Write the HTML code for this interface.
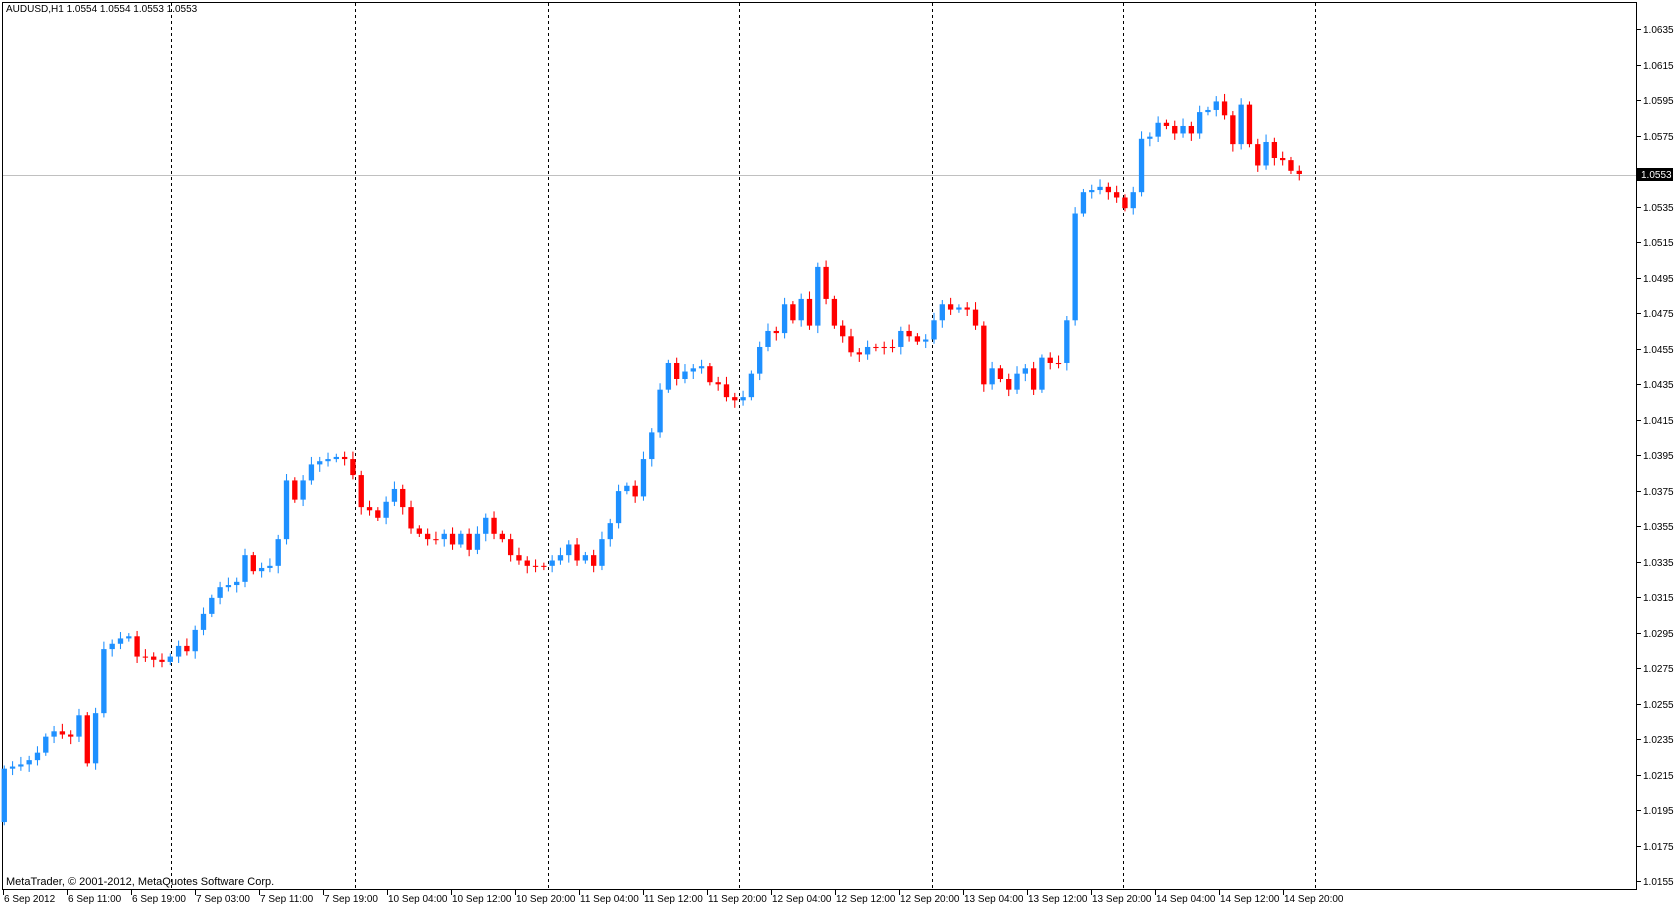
<!DOCTYPE html>
<html><head><meta charset="utf-8"><style>
html,body{margin:0;padding:0;background:#fff;}
body{width:1674px;height:907px;position:relative;overflow:hidden;font-family:"Liberation Sans",sans-serif;}
.t{position:absolute;font-size:10px;color:#000;white-space:nowrap;}
</style></head><body>
<svg id="s" width="1674" height="907" style="position:absolute;left:0;top:0">
<rect x="2.5" y="2.5" width="1634" height="887" fill="#fff" stroke="#000"/>
<g id="sep" stroke="#000" stroke-dasharray="3,3"></g>
<line x1="3" y1="175.5" x2="1636" y2="175.5" stroke="#c0c0c0"/>
<g id="c" transform="scale(1.0676)"></g>
<g id="ax"></g>
<rect x="1637" y="168" width="36" height="13" fill="#000"/>
<text x="1641" y="178" font-size="10" fill="#fff" font-family="Liberation Sans">1.0553</text>
</svg>
<div class="t" style="left:6px;top:4px">AUDUSD,H1  1.0554 1.0554 1.0553 1.0553</div>
<div class="t" style="left:6px;top:876px;font-size:11px">MetaTrader, © 2001-2012, MetaQuotes Software Corp.</div>
<div id="tl"></div>
<script>
var ns="http://www.w3.org/2000/svg";
function el(p,n,a){var e=document.createElementNS(ns,n);for(var k in a)e.setAttribute(k,a[k]);p.appendChild(e);return e;}
var sep=document.getElementById('sep');
[171,355,548,739,932,1123,1315].forEach(function(x){el(sep,'line',{x1:x+.5,y1:3,x2:x+.5,y2:889});});
var ax=document.getElementById('ax');
for(var i=0;i<=24;i++){var y=Math.round(29+i*35.5);
 el(ax,'line',{x1:1637,y1:y+.5,x2:1641,y2:y+.5,stroke:'#000'});
 var p=(1.0635-i*0.002).toFixed(4);
 if(i!=4){var t=el(ax,'text',{x:1643,y:y+4,'font-size':10,'font-family':'Liberation Sans'});t.textContent=p;}}
var labs=["6 Sep 2012","6 Sep 11:00","6 Sep 19:00","7 Sep 03:00","7 Sep 11:00","7 Sep 19:00","10 Sep 04:00","10 Sep 12:00","10 Sep 20:00","11 Sep 04:00","11 Sep 12:00","11 Sep 20:00","12 Sep 04:00","12 Sep 12:00","12 Sep 20:00","13 Sep 04:00","13 Sep 12:00","13 Sep 20:00","14 Sep 04:00","14 Sep 12:00","14 Sep 20:00"];
var h='';labs.forEach(function(l,i){var x=3+i*64;h+='<div class="t" style="left:'+(x+1)+'px;top:894px;font-size:10px">'+l+'</div>';el(ax,'line',{x1:x+.5,y1:890,x2:x+.5,y2:895,stroke:'#000'});});
document.getElementById('tl').innerHTML=h;
var cl=[720,718,716,712,705,690,685,688,690,670,715,668,608,603,598,596,615,615,618,620,615,605,610,590,575,560,550,548,545,520,535,532,530,505,450,468,450,435,432,430,428,430,445,475,478,485,470,458,475,495,500,505,505,500,510,500,515,500,485,500,505,520,525,530,530,530,525,520,510,525,520,530,505,490,460,455,465,430,405,365,340,355,348,345,343,358,360,372,375,372,350,325,310,312,285,300,280,305,250,280,305,315,330,332,325,325,325,325,310,315,320,318,300,285,290,288,290,305,360,345,355,365,350,345,365,335,340,340,300,200,180,178,175,180,185,195,180,130,128,115,118,125,118,125,105,103,95,108,135,98,135,155,133,148,150,160,163];
var c=document.getElementById('c');var o=770;var sp=(1217-4)/(cl.length-1);
cl.forEach(function(v,i){var x=4+i*sp;var up=v<o;var col=up?'#1e90ff':'#ff0000';
 var top=Math.min(o,v),bot=Math.max(o,v);if(bot-top<1)bot=top+1;
 var hi=top-3-(i*7%5),lo=bot+3+(i*3%5);
 el(c,'line',{x1:x,y1:hi,x2:x,y2:lo,stroke:col,'stroke-width':1});
 el(c,'rect',{x:x-2.5,y:top,width:5,height:bot-top,fill:col});
 o=v;});
</script>
</body></html>
